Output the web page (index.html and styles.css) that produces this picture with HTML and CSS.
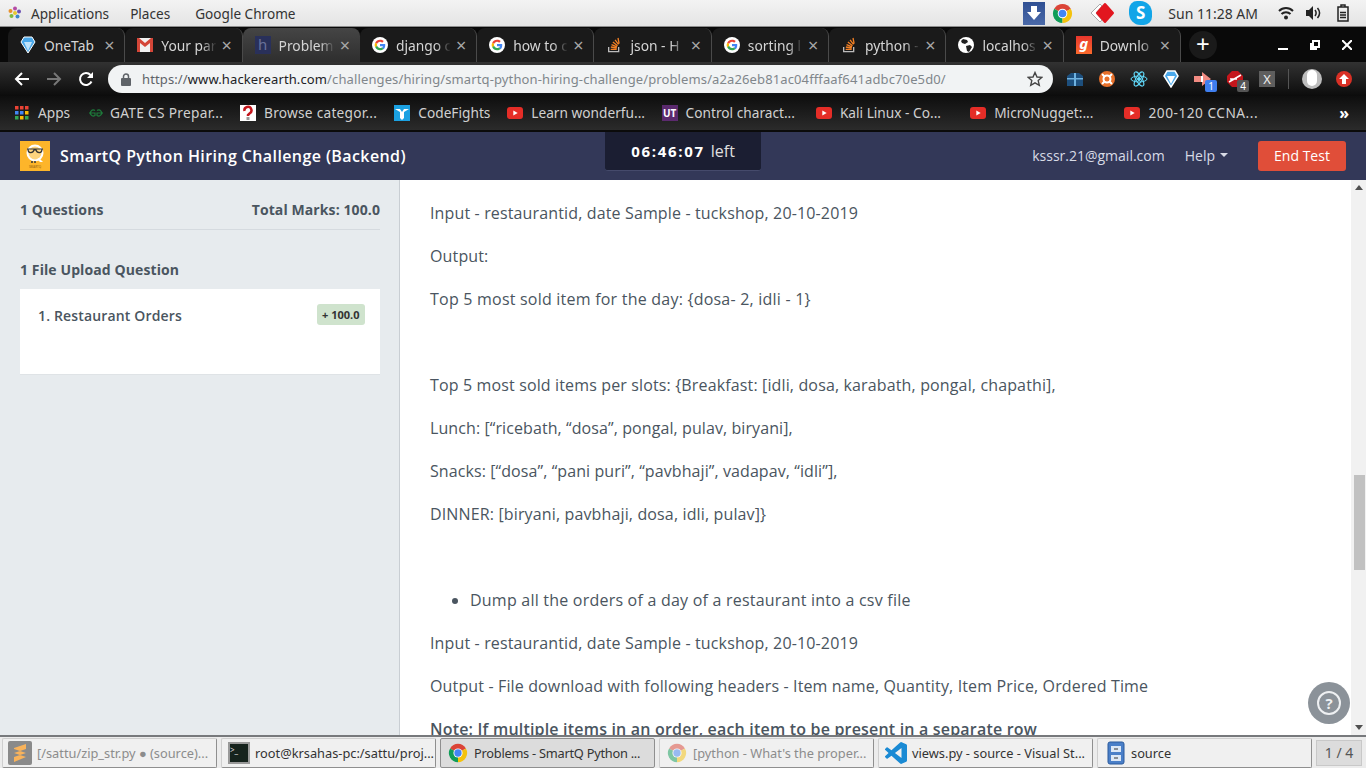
FILE: index.html
```html
<!DOCTYPE html>
<html lang="en">
  <head>
    <meta charset="UTF-8" />
    <title>Problems - SmartQ Python Hiring Challenge</title>
    <link rel="stylesheet" href="styles.css">
  </head>
  <body>
    <!-- shared icons -->
    <svg class="defs" width="0" height="0">
      <symbol id="i-google" viewBox="0 0 48 48">
        <circle cx="24" cy="24" r="24" fill="#fff"/>
        <path fill="#ea4335" d="M24 14.500c2.500 0 4.700.9 6.500 2.500l4.800-4.800C32.300 9.500 28.500 8 24 8c-6.300 0-11.700 3.600-14.300 8.900l5.600 4.300c1.300-3.900 4.900-6.700 8.700-6.700z"/>
        <path fill="#4285f4" d="M39.700 24.500c0-1.100-.1-2.200-.3-3.200H24v6.300h8.800c-.4 2-1.500 3.700-3.200 4.900l5.400 4.200c3.100-2.900 4.700-7.100 4.700-12.200z"/>
        <path fill="#fbbc05" d="M15.300 26.800c-.6-1.800-.6-3.800 0-5.600l-5.600-4.300c-2.300 4.600-2.300 9.700 0 14.200z"/>
        <path fill="#34a853" d="M24 40c4.500 0 8-1.500 11-4.300l-5.400-4.200c-1.500 1-3.400 1.600-5.600 1.600-4 0-7.400-2.800-8.700-6.500l-5.600 4.300C12.300 36.400 17.700 40 24 40z"/>
      </symbol>
      <symbol id="i-so" viewBox="0 0 24 24">
        <path fill="none" stroke="#bcbbbb" stroke-width="2" d="M4 15v7h15v-7"/>
        <path fill="none" stroke="#f48024" stroke-width="2" d="M7 18.500h9M7.300 15l8.800 1.500M8.300 11.300l8.200 3.600M10.300 7.600l7 5.500M13.600 4.200l5.200 7M18 1.500l1.700 8.500"/>
      </symbol>
      <symbol id="i-yt" viewBox="0 0 16 12">
        <rect width="16" height="12" rx="3" fill="#e52d27"/>
        <path fill="#fff" d="M6.300 3.400l4.400 2.600-4.400 2.600z"/>
      </symbol>
      <symbol id="i-chrome" viewBox="0 0 48 48">
        <path fill="#db4437" d="M24 24L6.700 14A20 20 0 0 1 41.300 14z"/>
        <path fill="#0f9d58" d="M24 24L6.700 14A20 20 0 0 0 24 44z"/>
        <path fill="#f4c20d" d="M24 24L41.300 14A20 20 0 0 1 24 44z"/>
        <circle cx="24" cy="24" r="10" fill="#fff"/>
        <circle cx="24" cy="24" r="8" fill="#4285f4"/>
      </symbol>
    </svg>

    <!-- desktop panel -->
    <div class="panel">
      <div class="panel-menu">
        <svg class="foot" width="14" height="14" viewBox="0 0 14 14">
          <circle cx="7" cy="2.500" r="2" fill="#b44ca5"/>
          <circle cx="2.500" cy="5" r="2" fill="#e8912c"/>
          <circle cx="11" cy="5.500" r="2" fill="#6a4fb3"/>
          <circle cx="3.500" cy="10" r="2" fill="#7cb83e"/>
          <circle cx="9.500" cy="10.500" r="2" fill="#3a86c8"/>
          <circle cx="7" cy="7" r="2" fill="#e5c92e"/>
        </svg>
        <span class="panel-applications">Applications</span>
        <span class="panel-places">Places</span>
        <span>Google Chrome</span>
      </div>
      <div class="panel-tray">
        <span class="tray-down">
          <svg width="16" height="16" viewBox="0 0 16 16"><path fill="#fff" d="M5 1h6v6h4l-7 8-7-8h4z"/></svg>
        </span>
        <svg class="tray-chrome" width="23" height="23"><use href="#i-chrome" width="23" height="23"/></svg>
        <svg class="tray-diamond" width="26" height="24" viewBox="0 0 26 24">
          <path fill="#fff" stroke="#aaa" d="M11 3L2 12l9 9 2-2-6-7 6-7z"/>
          <path fill="#e2161f" stroke="#e2161f" stroke-linejoin="round" stroke-width="2" d="M16 3l8 9-8 9-8-9z"/>
        </svg>
        <span class="tray-skype">S</span>
        <span class="tray-clock">Sun 11:28 AM</span>
        <svg class="tray-wifi" width="16" height="14" viewBox="0 0 16 14">
          <path fill="none" stroke="#222" stroke-width="2" d="M1 5c4-4 10-4 14 0M3.500 8c2.500-2.500 6.500-2.500 9 0"/>
          <circle cx="8" cy="11.500" r="2" fill="#222"/>
        </svg>
        <svg class="tray-sound" width="16" height="14" viewBox="0 0 16 14">
          <path fill="#222" d="M1 4h3l4-4v14l-4-4H1z"/>
          <path fill="none" stroke="#222" stroke-width="1.500" d="M10 4c1.500 2 1.500 4 0 6M12.500 2c2.500 3 2.500 7 0 10"/>
        </svg>
        <svg class="tray-battery" width="12" height="18" viewBox="0 0 12 18">
          <path fill="none" stroke="#222" stroke-width="1.500" d="M1 3h10v14H1zM4 3V1h4v2"/>
          <path stroke="#222" stroke-width="1.500" d="M3 8.500h6M3 11h6M3 13.500h6"/>
        </svg>
      </div>
    </div>

    <!-- chrome tabs -->
    <div class="tabstrip">
      <div class="tab">
        <svg class="favicon" width="16" height="18" viewBox="0 0 16 18">
          <path fill="#4aa8ea" stroke="#fff" d="M1 6l3-5h8l3 5-7 11z"/>
          <path fill="#bfe3fb" d="M4 6h8l-4 9z"/>
        </svg>
        <span class="tab-title tab-plain">OneTab</span><span class="tab-x">×</span>
      </div>
      <div class="tab">
        <svg class="favicon" width="16" height="14" viewBox="0 0 16 14">
          <rect width="16" height="14" fill="#f1f1f1"/>
          <path fill="#d44638" d="M0 0h2l6 5 6-5h2v14h-3V5L8 9 3 5v9H0z"/>
        </svg>
        <span class="tab-title">Your par</span><span class="tab-x">×</span>
      </div>
      <div class="tab tab-active">
        <span class="favicon fav-he">h</span>
        <span class="tab-title">Problem</span><span class="tab-x">×</span>
      </div>
      <div class="tab">
        <svg class="favicon" width="16" height="16"><use href="#i-google" width="16" height="16"/></svg>
        <span class="tab-title">django c</span><span class="tab-x">×</span>
      </div>
      <div class="tab">
        <svg class="favicon" width="16" height="16"><use href="#i-google" width="16" height="16"/></svg>
        <span class="tab-title">how to c</span><span class="tab-x">×</span>
      </div>
      <div class="tab">
        <svg class="favicon" width="16" height="16"><use href="#i-so" width="16" height="16"/></svg>
        <span class="tab-title">json - H</span><span class="tab-x">×</span>
      </div>
      <div class="tab">
        <svg class="favicon" width="16" height="16"><use href="#i-google" width="16" height="16"/></svg>
        <span class="tab-title">sorting l</span><span class="tab-x">×</span>
      </div>
      <div class="tab">
        <svg class="favicon" width="16" height="16"><use href="#i-so" width="16" height="16"/></svg>
        <span class="tab-title">python -</span><span class="tab-x">×</span>
      </div>
      <div class="tab">
        <svg class="favicon" width="16" height="16" viewBox="0 0 16 16">
          <circle cx="8" cy="8" r="8" fill="#fff"/>
          <path fill="#222" d="M5 2l4 1 1 2-3 2-3-1-1-2zM8 9l4-1 2 2-3 5-2-1z"/>
        </svg>
        <span class="tab-title">localhos</span><span class="tab-x">×</span>
      </div>
      <div class="tab">
        <span class="favicon fav-g">g</span>
        <span class="tab-title">Downlo</span><span class="tab-x">×</span>
      </div>
      <span class="tab-new">+</span>
      <div class="window-btns">
        <svg width="10" height="10" viewBox="0 0 10 10"><path fill="#fff" d="M0 8h10v2H0z"/></svg>
        <svg width="10" height="10" viewBox="0 0 10 10"><path fill="none" stroke="#fff" stroke-width="2" d="M3 1h6v6H3zM1 3v6h6"/></svg>
        <svg width="10" height="10" viewBox="0 0 10 10"><path fill="none" stroke="#fff" stroke-width="2" d="M0 0l10 10M10 0L0 10"/></svg>
      </div>
    </div>

    <!-- chrome toolbar -->
    <div class="toolbar">
      <svg class="nav-icon" width="16" height="16" viewBox="0 0 16 16"><path fill="none" stroke="#fff" stroke-width="2" d="M15 8H2M8 2L2 8l6 6"/></svg>
      <svg class="nav-icon nav-off" width="16" height="16" viewBox="0 0 16 16"><path fill="none" stroke="#777" stroke-width="2" d="M1 8h13M8 2l6 6-6 6"/></svg>
      <svg class="nav-icon" width="16" height="16" viewBox="0 0 16 16">
        <path fill="none" stroke="#fff" stroke-width="2" d="M13.500 10.500A6 6 0 1 1 12.500 4"/>
        <path fill="#fff" d="M9 7h6V1z"/>
      </svg>
      <div class="omnibox">
        <svg class="lock" width="10" height="13" viewBox="0 0 10 13">
          <path fill="none" stroke="#5f6368" stroke-width="1.500" d="M2.500 6V3.500a2.500 2.500 0 0 1 5 0V6"/>
          <rect y="5" width="10" height="8" rx="1" fill="#5f6368"/>
        </svg>
        <span class="url"><span class="url-scheme">https://</span><span class="url-host">www.hackerearth.com</span>/challenges/hiring/smartq-python-hiring-challenge/problems/a2a26eb81ac04fffaaf641adbc70e5d0/</span>
        <svg class="star" width="16" height="16" viewBox="0 0 16 16"><path fill="none" stroke="#444" stroke-width="1.400" d="M8 1.500l2 4.500 4.800.4-3.600 3.200 1.100 4.700L8 11.800l-4.300 2.500 1.100-4.700L1.200 6.400 6 6z"/></svg>
      </div>
      <div class="extensions">
        <span class="ext">
          <svg width="18" height="16" viewBox="0 0 18 16">
            <path fill="#1d4f7d" d="M1 5l4-3h8l4 3v10H1z"/>
            <path fill="#6fb2e0" d="M8 2h2v13H8zM1 7h16v1.500H1z"/>
          </svg>
        </span>
        <span class="ext">
          <svg width="16" height="16" viewBox="0 0 16 16">
            <circle cx="8" cy="8" r="8" fill="#e8702a"/>
            <circle cx="8" cy="8" r="3.500" fill="none" stroke="#fff" stroke-width="2"/>
            <path stroke="#fff" stroke-width="2" d="M3 3l3 3M13 3l-3 3M3 13l3-3M13 13l-3-3"/>
          </svg>
        </span>
        <span class="ext">
          <svg width="18" height="18" viewBox="0 0 18 18" fill="none" stroke="#61dafb">
            <ellipse cx="9" cy="9" rx="8" ry="3"/>
            <ellipse cx="9" cy="9" rx="8" ry="3" transform="rotate(60 9 9)"/>
            <ellipse cx="9" cy="9" rx="8" ry="3" transform="rotate(120 9 9)"/>
            <circle cx="9" cy="9" r="1.500" fill="#61dafb"/>
          </svg>
        </span>
        <span class="ext">
          <svg width="16" height="18" viewBox="0 0 16 18">
            <path fill="#4aa8ea" stroke="#fff" stroke-width="1.500" d="M1 6l3-5h8l3 5-7 11z"/>
            <path fill="#fff" d="M4 6h8l-4 8z"/>
          </svg>
        </span>
        <span class="ext">
          <svg width="18" height="14" viewBox="0 0 18 14"><path fill="#f28b82" d="M0 4h8V0l9 7-9 7v-4H0z"/><path fill="#fff" d="M7 4h2v6H7z"/></svg>
          <span class="ext-badge badge-blue">1</span>
        </span>
        <span class="ext">
          <svg width="16" height="16" viewBox="0 0 16 16"><path fill="#c4161c" d="M5 0h6l5 5v6l-5 5H5l-5-5V5z"/><path stroke="#fff" stroke-width="1.500" d="M2 11L14 4M3 8h7"/></svg>
          <span class="ext-badge badge-grey">4</span>
        </span>
        <span class="ext"><span class="ext-x">X</span></span>
        <span class="ext-sep"></span>
        <span class="ext-avatar"><span class="ext-avatar-in"></span></span>
        <span class="ext-update">
          <svg width="10" height="10" viewBox="0 0 10 10"><path fill="#fff" d="M5 0l5 5H7v5H3V5H0z"/></svg>
        </span>
      </div>
    </div>

    <!-- bookmarks bar -->
    <div class="bookmarks">
      <span class="bm bm-apps">
        <svg class="bm-icon" width="14" height="14" viewBox="0 0 14 14">
          <path fill="#ea4335" d="M0 0h3.500v3.500H0zM5 0h3.500v3.500H5zM10 0h3.500v3.500H10z"/>
          <path fill="#4285f4" d="M0 5h3.500v3.500H0zM5 5h3.500v3.500H5z"/>
          <path fill="#fbbc05" d="M10 5h3.500v3.500H10zM5 10h3.500v3.500H5z"/>
          <path fill="#34a853" d="M0 10h3.500v3.500H0zM10 10h3.500v3.500H10z"/>
        </svg>
        Apps
      </span>
      <span class="bm bm-gate">
        <svg class="bm-icon" width="16" height="10" viewBox="0 0 16 10">
          <path fill="none" stroke="#1d7a3a" stroke-width="1.200" d="M7 2.500a3 3 0 1 0 0 5V5H1M9 2.500a3 3 0 1 1 0 5V5h6"/>
        </svg>
        GATE CS Prepar...
      </span>
      <span class="bm bm-browse">
        <svg class="bm-icon" width="16" height="16" viewBox="0 0 16 16">
          <rect width="16" height="16" fill="#fff"/>
          <path fill="none" stroke="#c4161c" stroke-width="2.500" d="M4.500 6a3.500 3.500 0 1 1 5 2.500L8 10v1"/>
          <rect x="6.500" y="12" width="3" height="3" fill="#999"/>
        </svg>
        Browse categor...
      </span>
      <span class="bm bm-short">
        <svg class="bm-icon" width="16" height="16" viewBox="0 0 16 16">
          <rect width="16" height="16" fill="#1ba1e2"/>
          <path fill="#fff" d="M1 4h5l2 3 2-3h5l-5 3v6l-2 2-2-2V7z"/>
        </svg>
        CodeFights
      </span>
      <span class="bm">
        <svg class="bm-icon" width="16" height="12"><use href="#i-yt" width="16" height="12"/></svg>
        Learn wonderfu...
      </span>
      <span class="bm">
        <span class="bm-icon fav-ut">UT</span>
        Control charact...
      </span>
      <span class="bm">
        <svg class="bm-icon" width="16" height="12"><use href="#i-yt" width="16" height="12"/></svg>
        Kali Linux - Co...
      </span>
      <span class="bm">
        <svg class="bm-icon" width="16" height="12"><use href="#i-yt" width="16" height="12"/></svg>
        MicroNugget:...
      </span>
      <span class="bm bm-ccna">
        <svg class="bm-icon" width="16" height="12"><use href="#i-yt" width="16" height="12"/></svg>
        200-120 CCNA...
      </span>
      <span class="bm-more">»</span>
    </div>

    <!-- page -->
    <header class="app-header">
      <div class="brand">
        <svg class="brand-logo" width="30" height="30" viewBox="0 0 30 30">
          <rect width="30" height="30" fill="#fdb52a"/>
          <circle cx="15" cy="12" r="7.500" fill="#fdd47e" stroke="#fff" stroke-width="2"/>
          <path fill="#fff" d="M19 17l4 4h-3l-3-3z"/>
          <path fill="none" stroke="#333" stroke-width="1.200" d="M7 8h16M8 8.500c0 4 5 4 6 .5h2c1 3.500 6 3.500 6-.5"/>
          <path stroke="#333" stroke-width="1.500" d="M12 20v2M15 20v2"/>
          <text class="brand-logo-text" x="15" y="27">SMARTQ</text>
        </svg>
        <span class="brand-title">SmartQ Python Hiring Challenge (Backend)</span>
      </div>
      <div class="timer"><b>06:46:07</b> <span class="timer-left">left</span></div>
      <div class="header-right">
        <span class="header-email">ksssr.21@gmail.com</span>
        <span class="header-help">Help<span class="caret"></span></span>
        <button class="end-test">End Test</button>
      </div>
    </header>

    <div class="main">
      <aside class="sidebar">
        <div class="side-top">
          <span>1 Questions</span>
          <span>Total Marks: 100.0</span>
        </div>
        <div class="side-heading">1 File Upload Question</div>
        <div class="question-card">
          <span>1. Restaurant Orders</span>
          <span class="marks">+ 100.0</span>
        </div>
      </aside>

      <section class="content">
        <p>Input - restaurantid, date Sample - tuckshop, 20-10-2019</p>
        <p>Output:</p>
        <p class="line-wide">Top 5 most sold item for the day: {dosa- 2, idli - 1}</p>
        <p>&nbsp;</p>
        <p>Top 5 most sold items per slots: {Breakfast: [idli, dosa, karabath, pongal, chapathi],</p>
        <p class="line-tight">Lunch: [“ricebath, “dosa”, pongal, pulav, biryani],</p>
        <p class="line-tight">Snacks: [“dosa”, “pani puri”, “pavbhaji”, vadapav, “idli”],</p>
        <p>DINNER: [biryani, pavbhaji, dosa, idli, pulav]}</p>
        <p>&nbsp;</p>
        <ul>
          <li class="line-wide">Dump all the orders of a day of a restaurant into a csv file</li>
        </ul>
        <p>Input - restaurantid, date Sample - tuckshop, 20-10-2019</p>
        <p>Output - File download with following headers - Item name, Quantity, Item Price, Ordered Time</p>
        <p><strong>Note: If multiple items in an order, each item to be present in a separate row</strong></p>
      </section>

      <div class="scrollbar">
        <span class="scroll-up"></span>
        <span class="scroll-thumb"></span>
        <span class="scroll-down"></span>
      </div>

      <span class="help-fab"><span class="help-ring">?</span></span>
    </div>

    <!-- desktop taskbar -->
    <footer class="taskbar">
      <div class="task task-dim task-first">
        <span class="task-sublime">
          <svg width="14" height="20" viewBox="0 0 14 20"><path fill="#f9b35b" d="M13 1v5L1 10V5zM1 10l12 4v-4L1 6zM13 14l-12 5v-5l12-4z"/></svg>
        </span>
        <span class="task-name">[/sattu/zip_str.py ● (source)...</span>
      </div>
      <div class="task">
        <span class="task-term">&gt;_</span>
        <span class="task-name">root@krsahas-pc:/sattu/proj...</span>
      </div>
      <div class="task task-active">
        <svg width="22" height="22"><use href="#i-chrome" width="22" height="22"/></svg>
        <span class="task-name">Problems - SmartQ Python ...</span>
      </div>
      <div class="task task-dim">
        <svg class="icon-faded" width="22" height="22"><use href="#i-chrome" width="22" height="22"/></svg>
        <span class="task-name">[python - What's the proper...</span>
      </div>
      <div class="task">
        <svg width="22" height="22" viewBox="0 0 24 24">
          <path fill="#1a8ad4" d="M23.150 2.587L18.210.21a1.494 1.494 0 0 0-1.705.29l-9.460 8.630-4.120-3.128a.999.999 0 0 0-1.276.057L.327 7.261A1 1 0 0 0 .326 8.740L3.899 12 .326 15.260a1 1 0 0 0 .001 1.479L1.650 17.940a.999.999 0 0 0 1.276.057l4.120-3.128 9.460 8.630a1.492 1.492 0 0 0 1.704.29l4.942-2.377A1.500 1.500 0 0 0 24 20.060V3.939a1.500 1.500 0 0 0-.85-1.352zm-5.146 14.861L10.826 12l7.178-5.448v10.896z"/>
        </svg>
        <span class="task-name">views.py - source - Visual St...</span>
      </div>
      <div class="task">
        <svg class="task-cabinet" width="20" height="24" viewBox="0 0 18 24">
          <rect x="1" y="1" width="16" height="22" rx="2" fill="#4a7fc8" stroke="#2a5a9c"/>
          <rect x="4" y="5" width="10" height="6" fill="#dbe7f6"/>
          <rect x="4" y="14" width="10" height="6" fill="#dbe7f6"/>
          <path stroke="#333" d="M7 8h4M7 17h4"/>
        </svg>
        <span class="task-name">source</span>
      </div>
      <div class="pager">1 / 4</div>
    </footer>
  </body>
</html>
```

FILE: styles.css
```css
/* General Body Styling */
html,
body {
  margin: 0;
  padding: 0;
  height: 768px;
  overflow: hidden;
}

body {
  display: flex;
  flex-direction: column;
  font-family: "Noto Sans", sans-serif;
  background: #0b0b0b;
}

.defs {
  position: absolute;
}

/* Desktop Panel */
.panel {
  height: 27px;
  flex: none;
  display: flex;
  justify-content: space-between;
  align-items: center;
  background: linear-gradient(#f3f3f3, #e4e4e4);
  border-bottom: 1px solid #8c8c8c;
  box-sizing: border-box;
  font-size: 13.600px;
  color: #333;
}

.panel-menu {
  display: flex;
  align-items: center;
  padding-left: 8px;
}

.foot {
  margin-right: 9px;
}

.panel-applications {
  margin-right: 21px;
}

.panel-places {
  margin-right: 25px;
}

.panel-tray {
  display: flex;
  align-items: center;
  height: 26px;
}

.tray-down {
  width: 22px;
  height: 23px;
  background: linear-gradient(#2f4f93, #4a69a8);
  display: flex;
  align-items: center;
  justify-content: center;
  margin-right: 6px;
}

.tray-chrome {
  margin-right: 15px;
}

.tray-diamond {
  margin-right: 14px;
}

.tray-skype {
  width: 23px;
  height: 24px;
  border-radius: 35% 50% 35% 50%;
  background: #12a5e8;
  color: #fff;
  font-weight: 700;
  font-size: 17px;
  line-height: 24px;
  text-align: center;
  margin-right: 16px;
}

.tray-clock {
  margin-right: 20px;
  font-size: 14px;
}

.tray-wifi {
  margin-right: 11px;
}

.tray-sound {
  margin-right: 16px;
}

.tray-battery {
  margin-right: 17px;
}

/* Tabs */
.tabstrip {
  height: 35px;
  flex: none;
  display: flex;
  align-items: flex-end;
  padding-left: 8px;
  background: #090909;
  box-sizing: border-box;
  font-size: 13.800px;
  color: #d5d5d5;
}

.tab {
  width: 117.300px;
  height: 34px;
  box-sizing: border-box;
  display: flex;
  align-items: center;
  padding: 0 8px 0 12px;
  background: #1a1a1a;
  border-radius: 8px 8px 0 0;
  border-right: 1px solid #4a4a4a;
}

.tab-active {
  background: linear-gradient(#454545, #2e2e2e);
  border-right: none;
}

.favicon {
  flex: none;
  margin-right: 8px;
}

.fav-he {
  width: 16px;
  height: 18px;
  background: #29305a;
  color: #6a7099;
  font-size: 15px;
  line-height: 17px;
  text-align: center;
}

.fav-g {
  width: 16px;
  height: 18px;
  background: linear-gradient(#e8362d, #fb6a2c);
  color: #fff;
  font-weight: 700;
  font-style: italic;
  font-size: 15px;
  line-height: 15px;
  text-align: center;
}

.tab-title {
  flex: 1;
  white-space: nowrap;
  -webkit-mask-image: linear-gradient(90deg, #000 72%, transparent 98%);
  mask-image: linear-gradient(90deg, #000 72%, transparent 98%);
}

.tab-plain {
  -webkit-mask-image: none;
  mask-image: none;
}

.tab-x {
  flex: none;
  width: 14px;
  margin-left: 2px;
  color: #a8a8a8;
  font-size: 18px;
  line-height: 18px;
  text-align: center;
}

.tab-new {
  width: 28px;
  height: 28px;
  margin: 0 0 3px 8px;
  border-radius: 50%;
  background: #1a1a1a;
  color: #fff;
  font-size: 24px;
  line-height: 26px;
  text-align: center;
}

.window-btns {
  margin-left: auto;
  display: flex;
  align-items: center;
  gap: 22px;
  height: 34px;
  padding-right: 14px;
}

/* Toolbar */
.toolbar {
  height: 34px;
  flex: none;
  display: flex;
  align-items: center;
  background: linear-gradient(#323232, #0c0c0c);
  box-sizing: border-box;
  padding-left: 14px;
}

.nav-icon {
  flex: none;
  margin-right: 16px;
}

.omnibox {
  width: 945px;
  height: 28px;
  margin-left: -2px;
  flex: none;
  box-sizing: border-box;
  display: flex;
  align-items: center;
  background: #f1f3f4;
  border-radius: 14px;
  padding: 0 10px 0 13px;
  font-size: 13px;
  letter-spacing: 0.120px;
  color: #80868b;
}

.lock {
  flex: none;
  margin-right: 11px;
}

.url {
  flex: 1;
  white-space: nowrap;
}

.url-scheme {
  color: #5f6368;
}

.url-host {
  color: #202124;
}

.extensions {
  display: flex;
  align-items: center;
  padding-left: 6px;
}

.ext {
  position: relative;
  width: 32px;
  height: 24px;
  display: flex;
  align-items: center;
  justify-content: center;
}

.ext-badge {
  position: absolute;
  left: 18px;
  top: 13px;
  width: 12px;
  height: 12px;
  border-radius: 2px;
  color: #fff;
  font-size: 10px;
  line-height: 12px;
  text-align: center;
}

.badge-blue {
  background: #3f7ff0;
}

.badge-grey {
  background: #555;
}

.ext-x {
  width: 16px;
  height: 16px;
  background: #5e5e5e;
  color: #eee;
  font-size: 13px;
  line-height: 16px;
  text-align: center;
}

.ext-sep {
  width: 1px;
  height: 20px;
  margin: 0 13px 0 5px;
  background: #555;
}

.ext-avatar {
  width: 20px;
  height: 20px;
  border-radius: 50%;
  background: #bdbdbd;
  display: flex;
  justify-content: center;
  margin-right: 14px;
}

.ext-avatar-in {
  width: 10px;
  height: 16px;
  margin-top: 1px;
  border-radius: 5px;
  background: #fff;
}

.ext-update {
  width: 16px;
  height: 16px;
  border-radius: 50%;
  background: #d93025;
  display: flex;
  align-items: center;
  justify-content: center;
}

/* Bookmarks */
.bookmarks {
  height: 34px;
  flex: none;
  box-sizing: border-box;
  display: flex;
  align-items: center;
  background: linear-gradient(#0e0e0e, #2b2b2b);
  padding: 0 17px 1px 15px;
  font-size: 13.700px;
  color: #d0d0d0;
}

.bm {
  width: 154.300px;
  flex: none;
  display: flex;
  align-items: center;
  white-space: nowrap;
}

.bm-icon {
  flex: none;
  margin-right: 8px;
}

.bm-apps {
  width: 73px;
}

.bm-apps .bm-icon {
  margin-right: 9px;
}

.bm-gate {
  width: 152px;
  letter-spacing: 0.300px;
}

.bm-gate .bm-icon {
  margin-right: 6px;
}

.bm-browse {
  letter-spacing: 0.250px;
}

.bm-ccna {
  letter-spacing: 0.500px;
}

.bm-short {
  width: 113px;
}

.fav-ut {
  width: 16px;
  height: 16px;
  background: #5b2a6e;
  color: #fff;
  font-size: 10px;
  font-weight: 700;
  line-height: 16px;
  text-align: center;
}

.bm-more {
  margin-left: auto;
  color: #fff;
  font-size: 16px;
  font-weight: 700;
}

/* App Header */
.app-header {
  height: 48px;
  margin-top: 2px;
  flex: none;
  display: grid;
  grid-template-columns: 605px 156px 1fr;
  background: #333858;
  font-family: "Open Sans", sans-serif;
  color: #fff;
}

.brand {
  display: flex;
  align-items: center;
  padding: 0 0 0 20px;
}

.brand-logo {
  margin: 0 10px 0 0;
}

.brand-logo-text {
  font-size: 3px;
  fill: #8a5a10;
  text-anchor: middle;
}

.brand-title {
  font-size: 16px;
  font-weight: 600;
  letter-spacing: 0.400px;
}

.timer {
  height: 39px;
  background: #1b1e32;
  border-bottom: 1px solid #454a6b;
  border-radius: 0 0 3px 3px;
  box-sizing: border-box;
  display: flex;
  align-items: center;
  justify-content: center;
  gap: 6px;
  font-size: 16px;
}

.timer b {
  font-size: 15px;
  letter-spacing: 1.700px;
}

.timer-left {
  color: #e0e0e0;
}

.header-right {
  display: flex;
  align-items: center;
  justify-content: flex-end;
  padding: 0 20px 0 0;
  font-size: 14px;
  color: #d8dbe6;
}

.header-email {
  margin: 0 20px 2px 0;
}

.header-help {
  display: flex;
  align-items: center;
  margin: 0 30px 2px 0;
}

.caret {
  margin-left: 5px;
  border-top: 4px solid #d8dbe6;
  border-left: 4px solid transparent;
  border-right: 4px solid transparent;
}

.end-test {
  width: 88px;
  height: 30px;
  padding: 0 0 2px;
  border: none;
  border-radius: 3px;
  background: #e04e39;
  color: #fff;
  font-family: inherit;
  font-size: 14px;
}

/* Main Area */
.main {
  position: relative;
  height: 555px;
  flex: none;
  display: flex;
  overflow: hidden;
  background: #fff;
  font-family: "Open Sans", sans-serif;
}

.sidebar {
  width: 400px;
  flex: none;
  box-sizing: border-box;
  padding: 0 19px 0 20px;
  background: #e7ebee;
  border-right: 1px solid #c9ced3;
  font-size: 14px;
  font-weight: 600;
  letter-spacing: 0.160px;
  color: #4a5560;
}

.side-top {
  height: 50px;
  display: flex;
  justify-content: space-between;
  align-items: center;
  padding-top: 10px;
  box-sizing: border-box;
  border-bottom: 1px solid #d5dadf;
  font-weight: 700;
  letter-spacing: 0.100px;
}

.side-heading {
  margin-top: 30px;
  line-height: 19px;
  font-weight: 700;
  letter-spacing: 0.100px;
}

.question-card {
  height: 86px;
  margin-top: 10px;
  box-sizing: border-box;
  padding: 15px 15px 0 18px;
  display: flex;
  justify-content: space-between;
  align-items: flex-start;
  background: #fff;
  border-bottom: 1px solid #dfe3e6;
  line-height: 23px;
}

.marks {
  padding: 0 5.500px;
  height: 21px;
  border-radius: 3px;
  background: #cfe3cd;
  color: #333;
  font-size: 11px;
  font-weight: 700;
  letter-spacing: 0;
  line-height: 21px;
}

.content {
  flex: 1;
  padding: 22px 0 0 30px;
  font-size: 16px;
  letter-spacing: 0.140px;
  line-height: 23px;
  color: #4a5560;
}

.content p {
  margin: 0 0 20px;
}

.content strong {
  font-weight: 600;
  letter-spacing: 0.190px;
}

.content ul {
  margin: 0 0 20px;
  padding-left: 40px;
}

.content .line-wide {
  letter-spacing: 0.220px;
}

.content .line-tight {
  letter-spacing: 0.090px;
}

/* Scrollbar */
.scrollbar {
  width: 15px;
  flex: none;
  display: flex;
  flex-direction: column;
  align-items: center;
  background: #f1f1f1;
}

.scroll-up {
  margin-top: 5px;
  border-bottom: 5px solid #505050;
  border-left: 4px solid transparent;
  border-right: 4px solid transparent;
}

.scroll-thumb {
  width: 11px;
  height: 95px;
  margin: 285px 0 0 1px;
  background: #c1c1c1;
}

.scroll-down {
  margin-top: auto;
  margin-bottom: 5px;
  border-top: 5px solid #505050;
  border-left: 4px solid transparent;
  border-right: 4px solid transparent;
}

/* Help Button */
.help-fab {
  position: absolute;
  right: 16px;
  bottom: 11px;
  width: 42px;
  height: 42px;
  border-radius: 50%;
  background: #8b9299;
  display: flex;
  align-items: center;
  justify-content: center;
}

.help-ring {
  width: 24px;
  height: 24px;
  box-sizing: border-box;
  border: 2px solid #eef0f2;
  border-radius: 50%;
  color: #eef0f2;
  font-size: 15px;
  font-weight: 700;
  line-height: 20px;
  text-align: center;
}

/* Taskbar */
.taskbar {
  height: 33px;
  flex: none;
  box-sizing: border-box;
  display: flex;
  align-items: flex-end;
  padding: 0 4px 0 2px;
  gap: 4px;
  background: #ececec;
  border-top: 2px solid #77797c;
  font-size: 12.800px;
  color: #333;
}

.task {
  width: 215px;
  height: 30px;
  flex: none;
  box-sizing: border-box;
  display: flex;
  align-items: center;
  gap: 5px;
  padding: 0 0 1px 6px;
  background: #f0f0f0;
  border: 1px solid #cfcfcf;
  border-right-color: #8f8f8f;
  border-bottom-color: #8f8f8f;
  border-radius: 2px;
  white-space: nowrap;
  overflow: hidden;
}

.task-first {
  padding-left: 5px;
}

.task-active {
  background: #dcdcdc;
  border-top-color: #8f8f8f;
  border-left-color: #8f8f8f;
  letter-spacing: -0.250px;
}

.task-dim .task-name {
  color: #8c8c8c;
}

.task-cabinet {
  margin-left: 2px;
}

.icon-faded {
  opacity: 0.5;
}

.task-sublime {
  width: 24px;
  height: 24px;
  flex: none;
  background: #8a8a8a;
  border-radius: 2px;
  display: flex;
  align-items: center;
  justify-content: center;
}

.task-term {
  width: 22px;
  height: 22px;
  box-sizing: border-box;
  flex: none;
  background: #16231d;
  border: 2px solid #999;
  color: #ddd;
  font-size: 8px;
  line-height: 12px;
}

.pager {
  width: 47px;
  height: 26px;
  margin: 0 0 2px auto;
  background: #dcdcdc;
  border: 1px solid #c8c8c8;
  box-sizing: border-box;
  text-align: center;
  font-size: 14px;
  line-height: 24px;
  color: #555;
}
```
